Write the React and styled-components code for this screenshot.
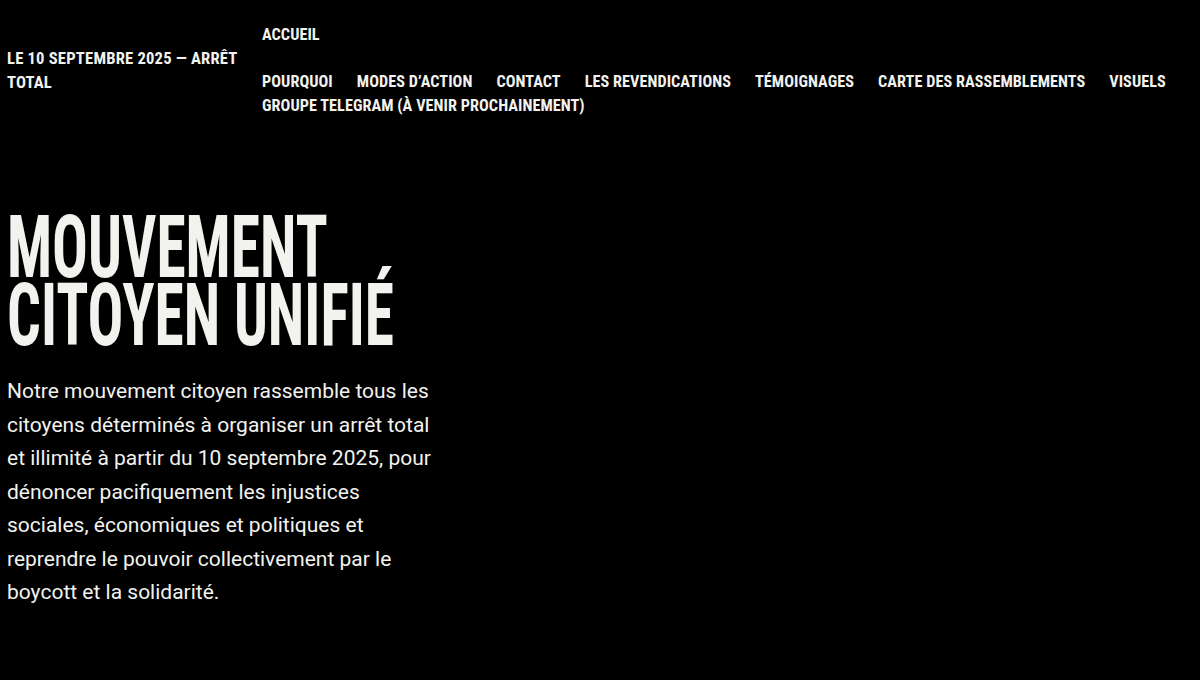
import React from "react";
import styled, { createGlobalStyle } from "styled-components";

const GlobalStyle = createGlobalStyle`
  html, body { margin: 0; padding: 0; background: #000; }
  body { color: #f2f2ee; font-family: Roboto, "Liberation Sans", sans-serif; }
  * { box-sizing: border-box; }
`;

const Page = styled.div`
  min-height: 680px;
  background: #000;
  padding: 23px 8px 0 7px;
`;

const Header = styled.header`
  display: flex;
  align-items: center;
`;

const condensed = `
  font-family: Roboto, "Liberation Sans Narrow", sans-serif;
  font-stretch: 75%;
  font-weight: 700;
  text-transform: uppercase;
`;

const Brand = styled.a`
  ${condensed}
  display: block;
  flex: 0 0 255px;
  padding-right: 14px;
  font-size: 16.6px;
  line-height: 24px;
  letter-spacing: 0.2px;
  color: inherit;
  text-decoration: none;
`;

const Nav = styled.nav`
  flex: 1;
  display: flex;
  flex-direction: column;
  gap: 23px;
`;

const NavList = styled.ul`
  list-style: none;
  margin: 0;
  padding: 0;
  display: flex;
  flex-wrap: wrap;
  column-gap: 24px;
`;

const NavItem = styled.li`
  ${condensed}
  font-size: 16.2px;
  line-height: 24px;
  letter-spacing: 0.06px;
  white-space: nowrap;
`;

const Hero = styled.section`
  padding-top: 95px;
`;

const Title = styled.h1`
  ${condensed}
  margin: 0;
  font-size: 87px;
  line-height: 68px;
  transform: scaleX(0.684);
  transform-origin: left top;
  white-space: nowrap;
`;

const Lead = styled.p`
  margin: 26px 0 0;
  width: 434px;
  font-family: Roboto, "Liberation Sans", sans-serif;
  font-size: 21px;
  line-height: 33.5px;
  font-weight: 400;
`;

const links = [
  "Pourquoi",
  "Modes d’action",
  "Contact",
  "Les revendications",
  "Témoignages",
  "Carte des rassemblements",
  "Visuels",
  "Groupe Telegram (à venir prochainement)",
];

export default function App() {
  return (
    <Page>
      <GlobalStyle />
      <Header>
        <Brand href="#">Le 10 septembre 2025 — Arrêt total</Brand>
        <Nav>
          <NavItem as="div">Accueil</NavItem>
          <NavList>
            {links.map((l) => (
              <NavItem key={l}>{l}</NavItem>
            ))}
          </NavList>
        </Nav>
      </Header>
      <Hero>
        <Title>
          Mouvement
          <br />
          citoyen unifié
        </Title>
        <Lead>
          Notre mouvement citoyen rassemble tous les citoyens déterminés à organiser un arrêt
          total et illimité à partir du 10 septembre 2025, pour dénoncer pacifiquement les
          injustices sociales, économiques et politiques et reprendre le pouvoir collectivement
          par le boycott et la solidarité.
        </Lead>
      </Hero>
    </Page>
  );
}
